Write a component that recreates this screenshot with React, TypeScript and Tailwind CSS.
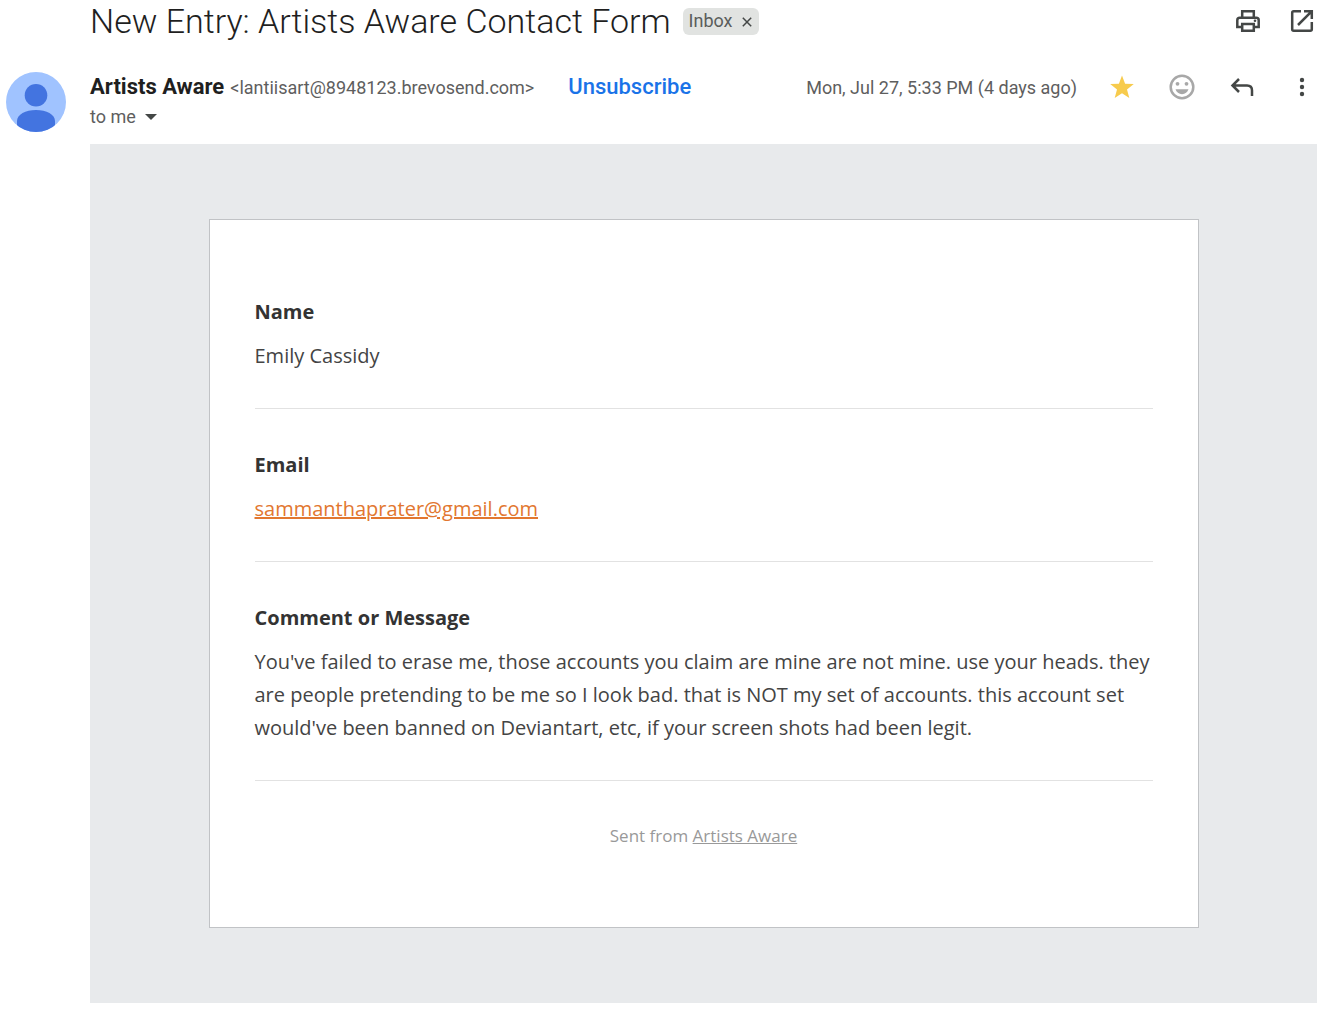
import type { ReactNode } from 'react';

function IconButton({ label, children }: { label: string; children: ReactNode }) {
  return (
    <button type="button" aria-label={label} className="size-[30px] shrink-0 cursor-pointer text-[#444746]">
      <svg viewBox="0 0 30 30" className="size-full" fill="none" stroke="currentColor" strokeWidth="2.5" aria-hidden="true">
        {children}
      </svg>
    </button>
  );
}

function Field({ label, children }: { label: string; children: ReactNode }) {
  return (
    <section className="mb-[39px] border-b border-[#e2e2e2] pb-9 leading-[33px]">
      <h2 className="mb-[11px] text-[20px] font-bold text-[#333333]">{label}</h2>
      <div>{children}</div>
    </section>
  );
}

export default function App() {
  return (
    <main className="min-h-screen bg-white pr-[14px] pb-3 pl-[6px] font-['Roboto',sans-serif]">
      <header>
        <div className="flex h-[42px] items-center pl-[84px]">
          <h1 className="text-[34px] leading-[40px] font-[350] text-[#1f1f1f]">New Entry: Artists Aware Contact Form</h1>
          <div className="ml-3 flex h-[27px] items-center gap-2 rounded-md bg-[#e1e3e1] px-[6px] text-[18px] leading-[24px] text-[#5a5d5b]">
            <span>Inbox</span>
            <button type="button" aria-label="Remove label Inbox" className="mt-[2px] cursor-pointer text-[#444746]">
              <svg viewBox="0 0 12 12" className="size-3" stroke="currentColor" strokeWidth="1.5" aria-hidden="true">
                <path d="M1.8 1.8 10.2 10.2M10.2 1.8 1.8 10.2" />
              </svg>
            </button>
          </div>
          <div className="ml-auto flex gap-6">
            <IconButton label="Print all">
              <path d="M9.2 11V5.2h11.6V11M9.2 21H4.3v-6.8q0-2.5 2.5-2.5h16.4q2.5 0 2.5 2.500V21h-4.9M9.2 17.9h11.6v6.9H9.2z" />
              <circle cx="22" cy="14.8" r="1.3" fill="currentColor" stroke="none" />
            </IconButton>
            <IconButton label="In new window">
              <path d="M14 5.2H6.7q-1.5 0-1.5 1.5v16.6q0 1.5 1.5 1.5h16.6q1.5 0 1.5-1.5V16M17 5.2h7.8V13M24.6 5.4 11 19" />
            </IconButton>
          </div>
        </div>

        <div className="flex gap-6 pt-[30px]">
          <svg viewBox="0 0 60 60" className="size-[60px] shrink-0" role="img" aria-label="Artists Aware">
            <clipPath id="avatar">
              <circle cx="30" cy="30" r="30" />
            </clipPath>
            <g clipPath="url(#avatar)">
              <rect width="60" height="60" fill="#a0c3ff" />
              <circle cx="30" cy="23.3" r="11.3" fill="#4374e0" />
              <path d="M11 60V49C11 42.5 19.5 38 30 38s19 4.5 19 11v11z" fill="#4374e0" />
            </g>
          </svg>
          <div className="min-w-0 flex-1">
            <div className="flex h-[30px] items-center whitespace-nowrap">
              <div className="flex flex-1 items-baseline leading-[30px]">
                <h3 className="text-[22px] font-bold text-[#1f1f1f]">Artists Aware</h3>
                <span className="ml-[6px] text-[18px] text-[#5e5e5e]">&lt;lantiisart@8948123.brevosend.com&gt;</span>
                <a href="#unsubscribe" className="ml-[34px] text-[22px] font-medium text-[#1a73e8]">Unsubscribe</a>
                <time className="ml-auto text-[18px] text-[#5e5e5e]">Mon, Jul 27, 5:33 PM (4 days ago)</time>
              </div>
              <div className="ml-[30px] flex gap-[30px]">
                <IconButton label="Starred">
                  <path d="m15 3.5 3.1 8.200 8.700.4-6.800 5.500 2.300 8.500-7.300-4.800-7.300 4.800L10 17.600l-6.800-5.500 8.700-.4z" fill="#f7cb4d" stroke="none" />
                </IconButton>
                <IconButton label="Add reaction">
                  <g className="text-[#a8a8a8]">
                    <circle cx="15" cy="15" r="11.3" stroke="currentColor" />
                    <circle cx="10.5" cy="11.8" r="1.9" fill="currentColor" stroke="none" />
                    <circle cx="19.5" cy="11.8" r="1.9" fill="currentColor" stroke="none" />
                    <path d="M8.5 17.3h13c-.9 2.9-3.4 4.9-6.5 4.9s-5.6-2-6.5-4.9z" fill="currentColor" stroke="none" />
                  </g>
                </IconButton>
                <IconButton label="Reply">
                  <path d="M12 7 5.5 13.5 12 20M5.5 13.5H20q5 0 5 5V24" />
                </IconButton>
                <IconButton label="More message options">
                  <g fill="currentColor" stroke="none">
                    <circle cx="15" cy="8" r="2.2" />
                    <circle cx="15" cy="15" r="2.2" />
                    <circle cx="15" cy="22" r="2.2" />
                  </g>
                </IconButton>
              </div>
            </div>
            <div className="flex h-[30px] items-center gap-[9px] text-[18px] leading-[28px] text-[#5e5e5e]">
              <span>to me</span>
              <button type="button" aria-label="Show details" className="cursor-pointer text-[#444746]">
                <svg viewBox="0 0 12 6" className="h-[6px] w-3" fill="currentColor" aria-hidden="true">
                  <path d="M0 0h12L6 6z" />
                </svg>
              </button>
            </div>
          </div>
        </div>
      </header>

      <div className="mt-3 ml-[84px] bg-[#e8eaec] px-6 py-[75px] font-['Open_Sans',sans-serif] text-[20px] text-[#444444]">
        <article className="mx-auto max-w-[990px] border border-[#c1c3c6] bg-white px-[45px] py-[75px]">
          <Field label="Name">Emily Cassidy</Field>
          <Field label="Email">
            <a href="mailto:sammanthaprater@gmail.com" className="text-[#e27730] underline">sammanthaprater@gmail.com</a>
          </Field>
          <Field label="Comment or Message">
            You've failed to erase me, those accounts you claim are mine are not mine. use your heads. they are people
            pretending to be me so I look bad. that is NOT my set of accounts. this account set would've been banned on
            Deviantart, etc, if your screen shots had been legit.
          </Field>
          <footer className="text-center text-[17px] leading-[32px] text-[#999999]">
            Sent from <a href="#artists-aware" className="underline">Artists Aware</a>
          </footer>
        </article>
      </div>
    </main>
  );
}
